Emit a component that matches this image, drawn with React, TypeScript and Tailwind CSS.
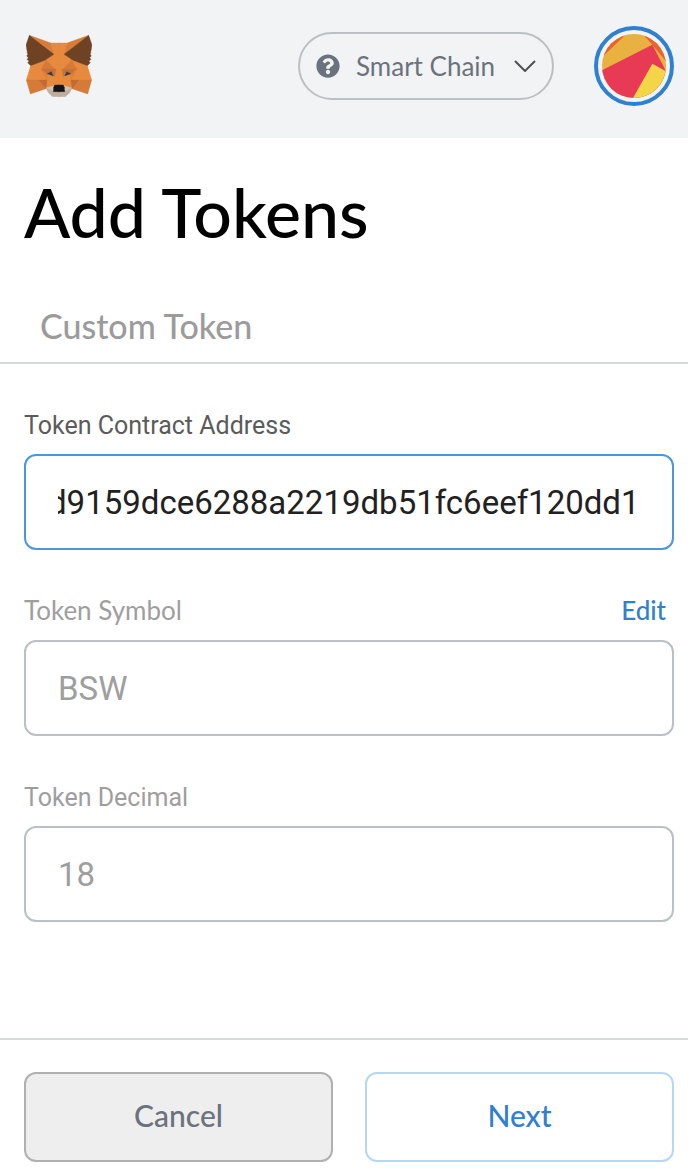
import { useEffect, useRef, useState } from 'react'
import { FaQuestionCircle } from 'react-icons/fa'

// left half of the face, each shape is mirrored for the right one
const FOX_SHAPES: [string, string][] = [
  ['#e78a3d', '122,69 148,69 148,200 107,206 85,180 48,180 61,137 104,119 131,103'],
  ['#d87c38', '57,46 122,69 131,103'],
  ['#704224', '57,46 131,103 104,121 61,137 52,128 56,124 50,118 54,113 49,108 52,104 47,75'],
  ['#d67a38', '108,120 93,147 134,148'],
  ['#c8703a', '93,148 137,147 133,170 127,160 111,164'],
  ['#2c3d4c', '111,161 123,155 129,168'],
  ['#dc8039', '93,148 111,164 110,180'],
  ['#d67a38', '48,180 60,222 107,206 85,180'],
  ['#c26a35', '85,180 110,180 107,206'],
  ['#d3c2b4', '107,204 134,196 148,196 148,217 128,217'],
  ['#bfae9f', '107,204 130,215 148,215 148,230 127,230 114,218'],
  ['#161616', '133,195 148,195 148,215 129,215 130,202'],
]

function FoxLogo() {
  return (
    <svg className="h-[62px] w-[66px]" viewBox="47 45 198 186" aria-hidden="true">
      {FOX_SHAPES.map(([color, points]) => (
        <g key={points} fill={color} stroke={color}>
          <polygon points={points} />
          <polygon points={points} transform="translate(292 0) scale(-1 1)" />
        </g>
      ))}
    </svg>
  )
}

function AccountIcon() {
  return (
    <svg className="size-16 rounded-full" viewBox="54 54 192 192" aria-hidden="true">
      <rect x="54" y="54" width="192" height="192" fill="#e9b13f" />
      <polygon fill="#e9622f" points="54,54 127,54 54,124" />
      <polygon fill="#e9622f" points="176,54 246,54 246,136 205,86" />
      <polygon fill="#e83a54" points="54,163 205,86 246,166 246,246 54,246" />
      <polygon fill="#f2d648" points="205,143 246,166 246,246 147,246" />
    </svg>
  )
}

function Header() {
  return (
    <header className="flex h-[138px] items-center justify-between bg-[#f2f3f4] pb-1.5 pl-[26px] pr-3.5">
      <FoxLogo />
      <div className="flex items-center gap-10">
        <button className="flex h-[68px] w-64 items-center rounded-full border-2 border-[#bbc0c5] px-4 text-[#6a737d]">
          <FaQuestionCircle className="size-6" />
          <span className="ml-4 flex-1 text-left text-[26px]">Smart Chain</span>
          <svg className="h-3 w-[22px]" viewBox="0 0 22 12" fill="none" stroke="#4d5156" strokeWidth="2" aria-hidden="true">
            <path d="M1 1l10 10L21 1" />
          </svg>
        </button>
        <button
          aria-label="Account"
          className="flex size-20 items-center justify-center rounded-full border-4 border-[#3080d2]"
        >
          <AccountIcon />
        </button>
      </div>
    </header>
  )
}

const inputClass = 'block h-24 w-full rounded-xl border-2 bg-white px-8 text-[33px] outline-none'

export default function App() {
  const [address, setAddress] = useState('d9159dce6288a2219db51fc6eef120dd1')
  const addressRef = useRef<HTMLInputElement>(null)

  // keep the end of the address in view
  useEffect(() => {
    const input = addressRef.current
    if (input) input.scrollLeft = input.scrollWidth
  }, [])

  return (
    <div className="flex min-h-screen flex-col bg-white font-['Lato',sans-serif]">
      <Header />

      <h1 className="mt-8 pl-6 text-[68px] font-medium leading-[84px] text-black">Add Tokens</h1>

      <nav className="mt-7 flex border-b-2 border-[#d6d9dc] px-6">
        <button className="h-20 px-4 pt-1.5 text-[34px] font-medium text-[#9b9b9b]">Custom Token</button>
      </nav>

      <form id="token-form" className="flex-1 pl-6 pr-3.5 pt-11" onSubmit={(e) => e.preventDefault()}>
        <label htmlFor="address" className="block h-[46px] font-['Roboto',sans-serif] text-[25px] leading-9 text-[#5b5b5b]">
          Token Contract Address
        </label>
        <input
          id="address"
          ref={addressRef}
          value={address}
          onChange={(e) => setAddress(e.target.value)}
          className={`${inputClass} border-[#4b97dc] font-['Roboto',sans-serif] text-[#212121]`}
        />

        <div className="mt-[42px] flex h-12 justify-between pr-2 text-[26px] leading-9">
          <label htmlFor="symbol" className="text-[#9e9e9e]">Token Symbol</label>
          <button type="button" className="h-9 font-medium text-[#3080d2]">Edit</button>
        </div>
        <input
          id="symbol"
          defaultValue="BSW"
          disabled
          className={`${inputClass} border-[#bbc0c5] font-['Roboto',sans-serif] text-[#9e9e9e]`}
        />

        <label htmlFor="decimal" className="mt-11 block h-[46px] font-['Roboto',sans-serif] text-[25px] leading-9 text-[#9e9e9e]">
          Token Decimal
        </label>
        <input
          id="decimal"
          defaultValue="18"
          disabled
          className={`${inputClass} border-[#bbc0c5] font-['Roboto',sans-serif] text-[#9e9e9e]`}
        />
      </form>

      <footer className="flex gap-8 border-t-2 border-[#d6d9dc] pb-2.5 pl-6 pr-3.5 pt-8 text-[30px] font-medium">
        <button className="h-[90px] flex-1 rounded-xl border-2 border-[#b0b0b0] bg-[#eeeeee] pb-1 text-[#6a737d]">Cancel</button>
        <button form="token-form" className="h-[90px] flex-1 rounded-xl border-2 border-[#b5d7f2] bg-white pb-1 text-[#3080d2]">
          Next
        </button>
      </footer>
    </div>
  )
}
